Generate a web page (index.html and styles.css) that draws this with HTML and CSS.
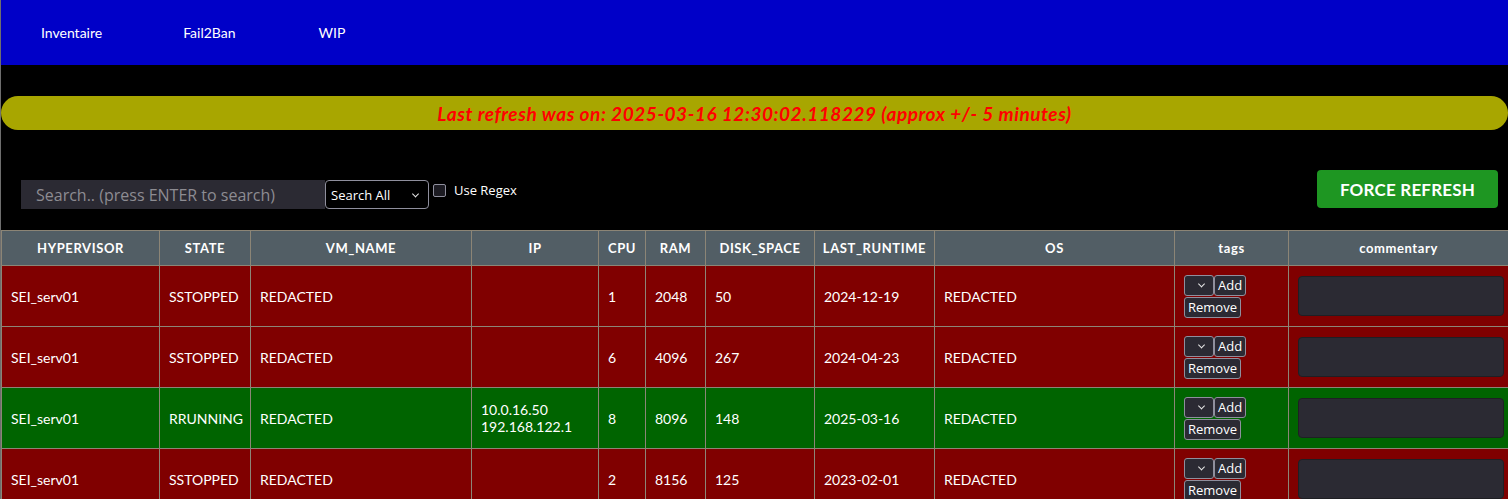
FILE: index.html
```html
<!DOCTYPE html>
<html>
<head>
<meta charset="utf-8">
<link rel="stylesheet" href="styles.css">
</head>
<body>
<nav class="topnav">
  <a class="navlink" href="#">Inventaire</a>
  <a class="navlink" href="#">Fail2Ban</a>
  <a class="navlink" href="#">WIP</a>
</nav>
<div class="banner">Last refresh was on: 2025-03-16 12:30:02.118229 (approx +/- 5 minutes)</div>
<div class="toolbar">
  <div class="searchgroup">
    <input class="search" type="text" placeholder="Search.. (press ENTER to search)">
    <span class="selwrap scopewrap"><select class="scope"><option>Search All</option></select></span>
    <label class="regex"><input type="checkbox" class="chk"> Use Regex</label>
  </div>
  <button class="force">FORCE REFRESH</button>
</div>
<table class="inv">
  <colgroup>
    <col style="width:158px"><col style="width:91px"><col style="width:221px"><col style="width:127px"><col style="width:47px"><col style="width:60px"><col style="width:109px"><col style="width:120px"><col style="width:240px"><col style="width:114px"><col style="width:220px">
  </colgroup>
  <thead>
    <tr><th>HYPERVISOR</th><th>STATE</th><th>VM_NAME</th><th>IP</th><th>CPU</th><th>RAM</th><th>DISK_SPACE</th><th>LAST_RUNTIME</th><th>OS</th><th>tags</th><th>commentary</th></tr>
  </thead>
  <tbody>
    <tr class="stopped"><td>SEI_serv01</td><td>SSTOPPED</td><td>REDACTED</td><td></td><td>1</td><td>2048</td><td>50</td><td>2024-12-19</td><td>REDACTED</td>
      <td><div class="tags"><span class="selwrap tagwrap"><select class="tagsel"><option></option></select></span><button class="tbtn">Add</button><button class="tbtn">Remove</button></div></td>
      <td><textarea class="comment"></textarea></td></tr>
    <tr class="stopped"><td>SEI_serv01</td><td>SSTOPPED</td><td>REDACTED</td><td></td><td>6</td><td>4096</td><td>267</td><td>2024-04-23</td><td>REDACTED</td>
      <td><div class="tags"><span class="selwrap tagwrap"><select class="tagsel"><option></option></select></span><button class="tbtn">Add</button><button class="tbtn">Remove</button></div></td>
      <td><textarea class="comment"></textarea></td></tr>
    <tr class="running"><td>SEI_serv01</td><td>RRUNNING</td><td>REDACTED</td><td>10.0.16.50<br>192.168.122.1</td><td>8</td><td>8096</td><td>148</td><td>2025-03-16</td><td>REDACTED</td>
      <td><div class="tags"><span class="selwrap tagwrap"><select class="tagsel"><option></option></select></span><button class="tbtn">Add</button><button class="tbtn">Remove</button></div></td>
      <td><textarea class="comment"></textarea></td></tr>
    <tr class="stopped"><td>SEI_serv01</td><td>SSTOPPED</td><td>REDACTED</td><td></td><td>2</td><td>8156</td><td>125</td><td>2023-02-01</td><td>REDACTED</td>
      <td><div class="tags"><span class="selwrap tagwrap"><select class="tagsel"><option></option></select></span><button class="tbtn">Add</button><button class="tbtn">Remove</button></div></td>
      <td><textarea class="comment"></textarea></td></tr>
  </tbody>
</table>
</body>
</html>
```
FILE: styles.css
```css
html, body {
  margin: 0;
  padding: 0;
  background: #000;
}
body {
  border-left: 1px solid #6e6e6e;
  font-family: "Lato", "DejaVu Sans", sans-serif;
  color: #fff;
  overflow: hidden;
}
.topnav {
  height: 65px;
  background: #0000c8;
  display: flex;
  align-items: center;
  padding-left: 40px;
}
.navlink {
  color: #fff;
  text-decoration: none;
  font-size: 14px;
  margin-right: 81px;
}
.navlink:nth-child(2) { margin-right: 83px; }
.banner {
  margin-top: 31px;
  height: 34px;
  border-radius: 17px;
  background: #a8a600;
  color: #ff0000;
  font-style: italic;
  font-weight: bold;
  font-size: 19px;
  letter-spacing: 0.55px;
  display: flex;
  align-items: center;
  justify-content: center;
}
.toolbar {
  display: flex;
  justify-content: space-between;
  align-items: flex-start;
  padding: 40px 10px 21px 20px;
}
.searchgroup {
  display: flex;
  align-items: flex-start;
  margin-top: 10px;
}
.search {
  width: 304px;
  height: 29px;
  box-sizing: border-box;
  background: #2b2a33;
  border: none;
  color: #fff;
  font-family: "Open Sans", sans-serif;
  font-size: 16px;
  padding: 0 15px;
}
.search::placeholder { color: #8d8c92; }
.selwrap {
  position: relative;
  display: inline-block;
}
.selwrap::after {
  content: "";
  position: absolute;
  top: 50%;
  width: 4px;
  height: 4px;
  border-right: 1.5px solid #e8e8e8;
  border-bottom: 1.5px solid #e8e8e8;
  transform: translateY(-70%) rotate(45deg);
  pointer-events: none;
}
.scopewrap::after { right: 11px; }
.tagwrap::after { right: 10px; }
.scope {
  appearance: none;
  width: 104px;
  height: 29px;
  background: #000;
  color: #fff;
  border: 1px solid #8f8f9d;
  border-radius: 4px;
  font-family: "Open Sans", sans-serif;
  font-size: 13px;
  padding-left: 5px;
  display: block;
}
.regex {
  display: flex;
  align-items: center;
  font-family: "Open Sans", sans-serif;
  font-size: 13px;
  margin-left: 4px;
  margin-top: 1px;
}
.chk {
  appearance: none;
  width: 13px;
  height: 13px;
  margin: 0 8px 0 0;
  background: #1c1b22;
  border: 1px solid #8f8f9d;
  border-radius: 2px;
  box-sizing: border-box;
}
.force {
  width: 181px;
  height: 38px;
  background: #1e9622;
  color: #fff;
  border: none;
  border-radius: 4px;
  font-family: "Lato", sans-serif;
  font-weight: bold;
  font-size: 17px;
  letter-spacing: 0.2px;
}
.inv {
  border-collapse: collapse;
  table-layout: fixed;
  width: 1507px;
}
.inv th, .inv td {
  border: 1px solid #8c8576;
}
.inv th {
  background: #525e65;
  height: 34px;
  font-size: 13px;
  font-weight: bold;
  letter-spacing: 0.6px;
  padding: 0;
}
.inv td {
  height: 61px;
  font-size: 14px;
  padding: 0 9px;
  box-sizing: border-box;
}
.stopped td { background: #800000; }
.running td { background: #006400; }
.tags {
  display: flex;
  flex-wrap: wrap;
  width: 70px;
  row-gap: 1px;
}
.tagsel, .tbtn {
  background: #2b2a33;
  color: #fff;
  border: 1px solid #8f8f9d;
  border-radius: 3px;
  height: 21px;
  font-family: "Open Sans", sans-serif;
  font-size: 13px;
  padding: 0 3px;
  box-sizing: border-box;
}
.tagsel {
  appearance: none;
  width: 30px;
  display: block;
}
.comment {
  display: block;
  width: 206px;
  height: 40px;
  box-sizing: border-box;
  background: #2b2a33;
  border: 1px solid #1f1f24;
  border-radius: 4px;
  resize: none;
}
```
